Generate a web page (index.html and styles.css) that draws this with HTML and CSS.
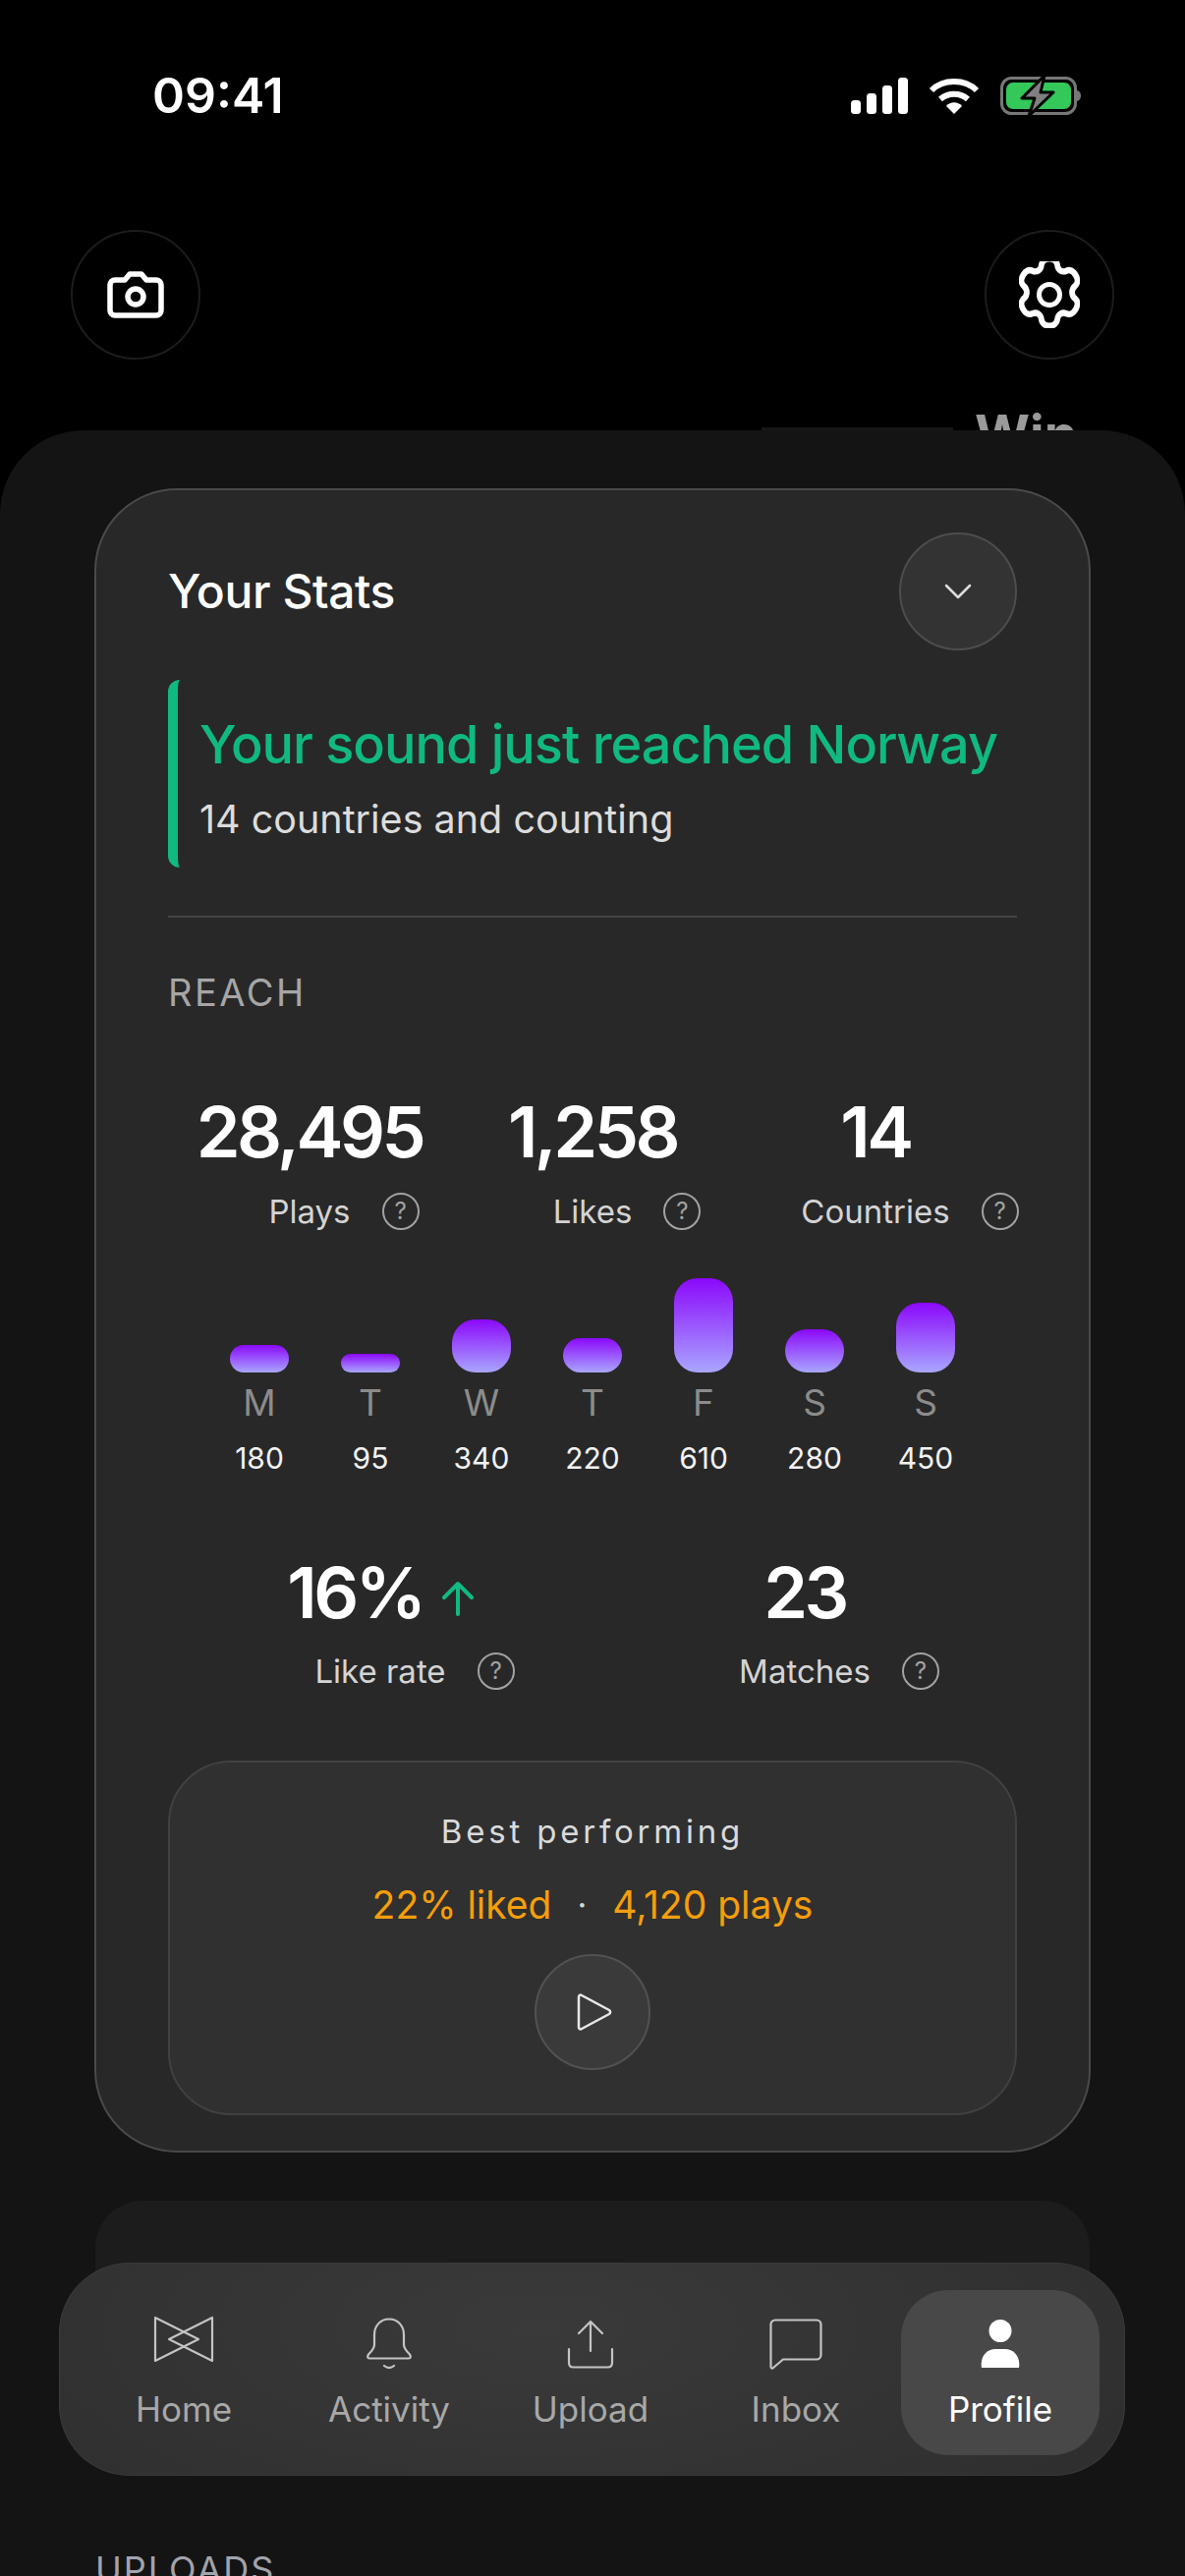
FILE: index.html
```html
<!DOCTYPE html>
<html lang="en">
<head>
<meta charset="utf-8">
<title>Your Stats</title>
<link rel="stylesheet" href="styles.css">
</head>
<body>
<div class="screen">
  <header class="top">
    <div class="status">
      <span class="time">09:41</span>
      <div class="status-icons">
        <svg class="i-signal" width="58" height="37" viewBox="0 0 58 37"><rect x="0" y="23" width="10" height="14" rx="3.5"/><rect x="16" y="16" width="10" height="21" rx="3.5"/><rect x="32" y="8" width="10" height="29" rx="3.5"/><rect x="48" y="0" width="10" height="37" rx="3.5"/></svg>
        <svg width="52" height="37" viewBox="0 0 52 37" fill="none" stroke="#fff" stroke-width="6"><path d="M3 13C15 1 37 1 49 13"/><path d="M12 22c8-7 20-7 28 0"/><path d="M18 29l8 8 8-8c-4-5-12-5-16 0z" fill="#fff" stroke="none"/></svg>
        <svg width="82" height="39" viewBox="0 0 82 39"><rect x="1.5" y="1.5" width="75" height="36" rx="10" fill="none" stroke="#777" stroke-width="3"/><rect x="6" y="6" width="66" height="27" rx="7" fill="#34c759"/><path d="M78 14c3 .5 4 3 4 5.500s-1 5-4 5.500z" fill="#777"/><path d="M45 -1L22 22h13l-6 18 25-24H41z" fill="#808080" stroke="#000" stroke-width="3" stroke-linejoin="round"/></svg>
      </div>
    </div>
    <div class="actions">
      <button class="round">
        <svg width="58" height="48" viewBox="0 0 58 48" fill="none" stroke="#fff" stroke-width="5.500" stroke-linejoin="round"><path d="M8 9h10l5-6h12l5 6h10a5 5 0 0 1 5 5v26a5 5 0 0 1-5 5H8a5 5 0 0 1-5-5V14a5 5 0 0 1 5-5z"/><circle cx="29" cy="26" r="8"/></svg>
      </button>
      <button class="round">
        <svg width="62" height="68" viewBox="0 0 62 68" fill="none" stroke="#fff" stroke-width="5" stroke-linejoin="round"><path transform="translate(31 34) scale(1.16 1.28) translate(-31 -34.500)" d="M24 11c1-7 13-7 14 0 .5 4 4 6 8 4.500 6-3 13 8 7.500 12-3.500 2.500-3.500 7.500 0 10 5.500 4-1.500 15-7.500 12-4-1.500-7.500.5-8 4.500-1 7-13 7-14 0-.5-4-4-6-8-4.500-6 3-13-8-7.500-12 3.500-2.500 3.500-7.500 0-10-5.500-4 1.500-15 7.500-12 4 1.500 7.500-.5 8-4.500z"/><circle cx="31" cy="34" r="10.500"/></svg>
      </button>
    </div>
    <div class="peek">Win</div>
    <div class="peek-bar"></div>
  </header>

  <main class="sheet">
    <section class="card">
      <div class="card-head">
        <h1 class="card-title">Your Stats</h1>
        <button class="toggle">
          <svg width="28" height="16" viewBox="0 0 28 16" fill="none" stroke="#ddd" stroke-width="2.500" stroke-linecap="round" stroke-linejoin="round"><path d="M2 2l12 12L26 2"/></svg>
        </button>
      </div>
      <div class="alert">
        <div class="alert-title">Your sound just reached Norway</div>
        <div class="alert-sub">14 countries and counting</div>
      </div>
      <div class="divider"></div>
      <div class="eyebrow">REACH</div>

      <div class="stat-row three">
        <div class="stat"><div class="num">28,495</div><div class="lab">Plays<span class="help">?</span></div></div>
        <div class="stat"><div class="num">1,258</div><div class="lab">Likes<span class="help">?</span></div></div>
        <div class="stat"><div class="num">14</div><div class="lab">Countries<span class="help">?</span></div></div>
      </div>

      <div class="chart">
        <div class="day"><div class="bar-slot"><div class="bar" style="height:28px"></div></div><div class="d">M</div><div class="v">180</div></div>
        <div class="day"><div class="bar-slot"><div class="bar" style="height:19px"></div></div><div class="d">T</div><div class="v">95</div></div>
        <div class="day"><div class="bar-slot"><div class="bar" style="height:54px"></div></div><div class="d">W</div><div class="v">340</div></div>
        <div class="day"><div class="bar-slot"><div class="bar" style="height:35px"></div></div><div class="d">T</div><div class="v">220</div></div>
        <div class="day"><div class="bar-slot"><div class="bar" style="height:96px"></div></div><div class="d">F</div><div class="v">610</div></div>
        <div class="day"><div class="bar-slot"><div class="bar" style="height:44px"></div></div><div class="d">S</div><div class="v">280</div></div>
        <div class="day"><div class="bar-slot"><div class="bar" style="height:71px"></div></div><div class="d">S</div><div class="v">450</div></div>
      </div>

      <div class="stat-row two">
        <div class="stat"><div class="num with-arrow">16%<svg width="32" height="36" viewBox="0 0 32 36" fill="none" stroke="#10b981" stroke-width="4" stroke-linecap="round" stroke-linejoin="round"><path d="M16 34V3M2 17L16 3l14 14"/></svg></div><div class="lab">Like rate<span class="help">?</span></div></div>
        <div class="stat"><div class="num">23</div><div class="lab">Matches<span class="help">?</span></div></div>
      </div>

      <div class="best">
        <div class="best-title">Best performing</div>
        <div class="best-meta"><span>22% liked</span><span class="dot">·</span><span>4,120 plays</span></div>
        <button class="play">
          <svg width="36" height="38" viewBox="0 0 36 38" fill="none" stroke="#e8e8e8" stroke-width="2.500" stroke-linejoin="round"><path d="M2 3.500c0-1.500 1.500-2.500 3-1.500l28 15c1.500 1 1.500 3 0 4L5 36c-1.500 1-3 0-3-1.500z"/></svg>
        </button>
      </div>
    </section>

    <section class="ghost-card"></section>
    <div class="eyebrow uploads">UPLOADS</div>
  </main>

  <nav class="tabbar">
    <div class="tab">
      <div class="slot"><svg width="62" height="58" viewBox="0 0 62 58" fill="none" stroke="#c4c4c4" stroke-width="2.200" stroke-linejoin="round"><path d="M2 2V46L46 24z"/><path d="M60 2V46L16 24z"/></svg></div>
      <span>Home</span>
    </div>
    <div class="tab">
      <div class="slot"><svg width="48" height="54" viewBox="0 0 48 54" fill="none" stroke="#c4c4c4" stroke-width="2.200" stroke-linecap="round" stroke-linejoin="round"><path d="M24 1.500c-9 0-15 7-15 16v10c0 4-3 7-6 10-1.500 2-1 4 1 4h40c2 0 2.500-2 1-4-3-3-6-6-6-10v-10c0-9-6-16-15-16z"/><path d="M19 49c3 2.500 7 2.500 10 0"/></svg></div>
      <span>Activity</span>
    </div>
    <div class="tab">
      <div class="slot"><svg width="48" height="50" viewBox="0 0 48 50" fill="none" stroke="#c4c4c4" stroke-width="2.200" stroke-linecap="round" stroke-linejoin="round"><path d="M24 32V2M12 14L24 2l12 12"/><path d="M2 30v14c0 3 1.500 4.500 4.500 4.500h35c3 0 4.500-1.500 4.500-4.500V30"/></svg></div>
      <span>Upload</span>
    </div>
    <div class="tab">
      <div class="slot"><svg width="54" height="52" viewBox="0 0 54 52" fill="none" stroke="#c4c4c4" stroke-width="2.200" stroke-linejoin="round"><path d="M6 1.500h42c2.500 0 4.500 2 4.500 4.500v31c0 2.500-2 4.500-4.500 4.500H14L4 50c-1 1-2.500.5-2.500-1V6c0-2.500 2-4.500 4.500-4.500z"/></svg></div>
      <span>Inbox</span>
    </div>
    <div class="tab active">
      <div class="slot"><svg width="40" height="50" viewBox="0 0 40 50" fill="#fff"><circle cx="20" cy="11.500" r="11.500"/><path d="M1 49c-2-12 6-19 14-19h10c8 0 16 7 14 19z"/></svg></div>
      <span>Profile</span>
    </div>
  </nav>
</div>
</body>
</html>
```

FILE: styles.css
```css
* { box-sizing: border-box; }
html, body { margin: 0; padding: 0; background: #000; }
body { font-family: "Inter", "Liberation Sans", sans-serif; color: #fff; }
button { padding: 0; margin: 0; font: inherit; color: inherit; }
h1 { margin: 0; }

.screen { position: relative; width: 1206px; height: 2622px; overflow: hidden; background: #000; }

.top { position: relative; height: 438px; }
.status { height: 234px; padding: 68px 106px 0 155px; display: flex; justify-content: space-between; align-items: flex-start; }
.time { font-size: 50px; line-height: 58px; font-weight: 600; letter-spacing: 0; }
.status-icons { display: flex; gap: 21px; padding-top: 10px; align-items: center; }
.i-signal { fill: #fff; }

.actions { display: flex; justify-content: space-between; padding: 0 72px; }
.round { width: 132px; height: 132px; border-radius: 50%; background: #000; border: 2px solid #1c1c1c; display: flex; align-items: center; justify-content: center; }

.peek { position: absolute; left: 992px; top: 410px; font-size: 54px; line-height: 64px; font-weight: 700; color: #9a9a9a; }
.peek-bar { position: absolute; left: 775px; top: 435px; width: 195px; height: 3px; background: #161616; }

.sheet { position: relative; height: 2184px; padding: 59px 96px 0; background: #141414; border-radius: 85px 85px 0 0; }

.card { height: 1694px; padding: 43px 73px 0; background: #282828; border: 2px solid #4a4a4a; border-radius: 84px; }
.card-head { display: flex; justify-content: space-between; align-items: center; height: 120px; }
.card-title { font-size: 48px; font-weight: 500; line-height: 58px; letter-spacing: -0.4px; color: #fff; }
.toggle { width: 120px; height: 120px; border-radius: 50%; background: #333; border: 2px solid #4d4d4d; display: flex; align-items: center; justify-content: center; }

.alert { margin-top: 30px; height: 191px; padding: 32px 0 0 22px; border-left: 10px solid #10b981; border-radius: 12px; }
.alert-title { font-size: 54px; line-height: 68px; font-weight: 500; letter-spacing: -1px; color: #10b981; }
.alert-sub { margin-top: 19px; font-size: 39.500px; line-height: 46px; color: #dcdcdc; }

.divider { margin-top: 49px; height: 2px; background: #444; }

.eyebrow { font-size: 38px; line-height: 46px; letter-spacing: 2.500px; color: #a6a6a6; }
.card .eyebrow { margin-top: 53px; }

.stat-row { display: grid; }
.three { grid-template-columns: repeat(3, 1fr); margin-top: 79px; }
.two { grid-template-columns: repeat(2, 1fr); margin-top: 77px; }
.stat { display: flex; flex-direction: column; align-items: center; }
.num { font-size: 72px; line-height: 80px; font-weight: 600; letter-spacing: -3.500px; color: #fff; }
.with-arrow { display: flex; align-items: center; gap: 19px; }
.with-arrow svg { margin-top: 12px; }
.lab { position: relative; margin-top: 18px; font-size: 33px; line-height: 46px; color: #d4d4d4; }
.two .lab { margin-top: 17px; }
.help { position: absolute; left: 100%; top: 4px; margin-left: 32px; width: 38px; height: 38px; border: 2.500px solid #a2a2a2; border-radius: 50%; display: flex; align-items: center; justify-content: center; font-size: 24px; line-height: 1; color: #a2a2a2; }

.chart { display: grid; grid-template-columns: repeat(7, 113px); justify-content: center; margin-top: 24px; }
.day { display: flex; flex-direction: column; align-items: center; }
.bar-slot { height: 117px; display: flex; align-items: flex-end; }
.bar { width: 60px; border-radius: 24px; background: linear-gradient(180deg, #8b08fb 0%, #a9a6ff 100%); }
.d { margin-top: 8px; font-size: 37px; line-height: 46px; color: #8c8c8c; }
.v { margin-top: 13px; font-size: 30px; line-height: 40px; color: #f2f2f2; }

.best { margin-top: 68px; height: 361px; padding-top: 50px; background: #303030; border: 2px solid #414141; border-radius: 64px; display: flex; flex-direction: column; align-items: center; }
.best-title { font-size: 33px; line-height: 40px; letter-spacing: 3.800px; color: #dadada; }
.best-meta { margin-top: 32px; display: flex; gap: 26px; font-size: 39px; line-height: 46px; color: #f59e0b; }
.dot { color: #d8d8d8; font-size: 34px; }
.play { margin-top: 27px; width: 118px; height: 118px; border-radius: 50%; background: #3a3a3a; border: 2px solid #525252; display: flex; align-items: center; justify-content: center; padding-left: 4px; }

.ghost-card { margin-top: 49px; height: 250px; margin-left: 1px; margin-right: 1px; background: #1c1c1c; border-radius: 48px; }
.uploads { margin-top: 102px; margin-left: 1px; font-size: 36px; letter-spacing: 2px; color: #a0a4ac; }

.tabbar { position: absolute; left: 60px; top: 2303px; width: 1085px; height: 217px; padding: 28px 26px 21px 21px; display: grid; grid-template-columns: 212px 206px 204px 214px 202px; justify-content: start; align-items: stretch; border-radius: 72px; background: radial-gradient(ellipse 60% 120% at 45% 30%, #3a3a3a 0%, #2f2f2f 100%); box-shadow: inset 0 0 0 1px #383838; }
.tab { display: flex; flex-direction: column; align-items: center; justify-content: flex-start; gap: 15px; padding-top: 26px; font-size: 35px; line-height: 46px; color: #a8a8a8; }
.slot { height: 57px; display: flex; align-items: center; justify-content: center; }
.tab svg { display: block; }
.tab.active { background: #484848; border-radius: 48px; color: #fff; }
```
